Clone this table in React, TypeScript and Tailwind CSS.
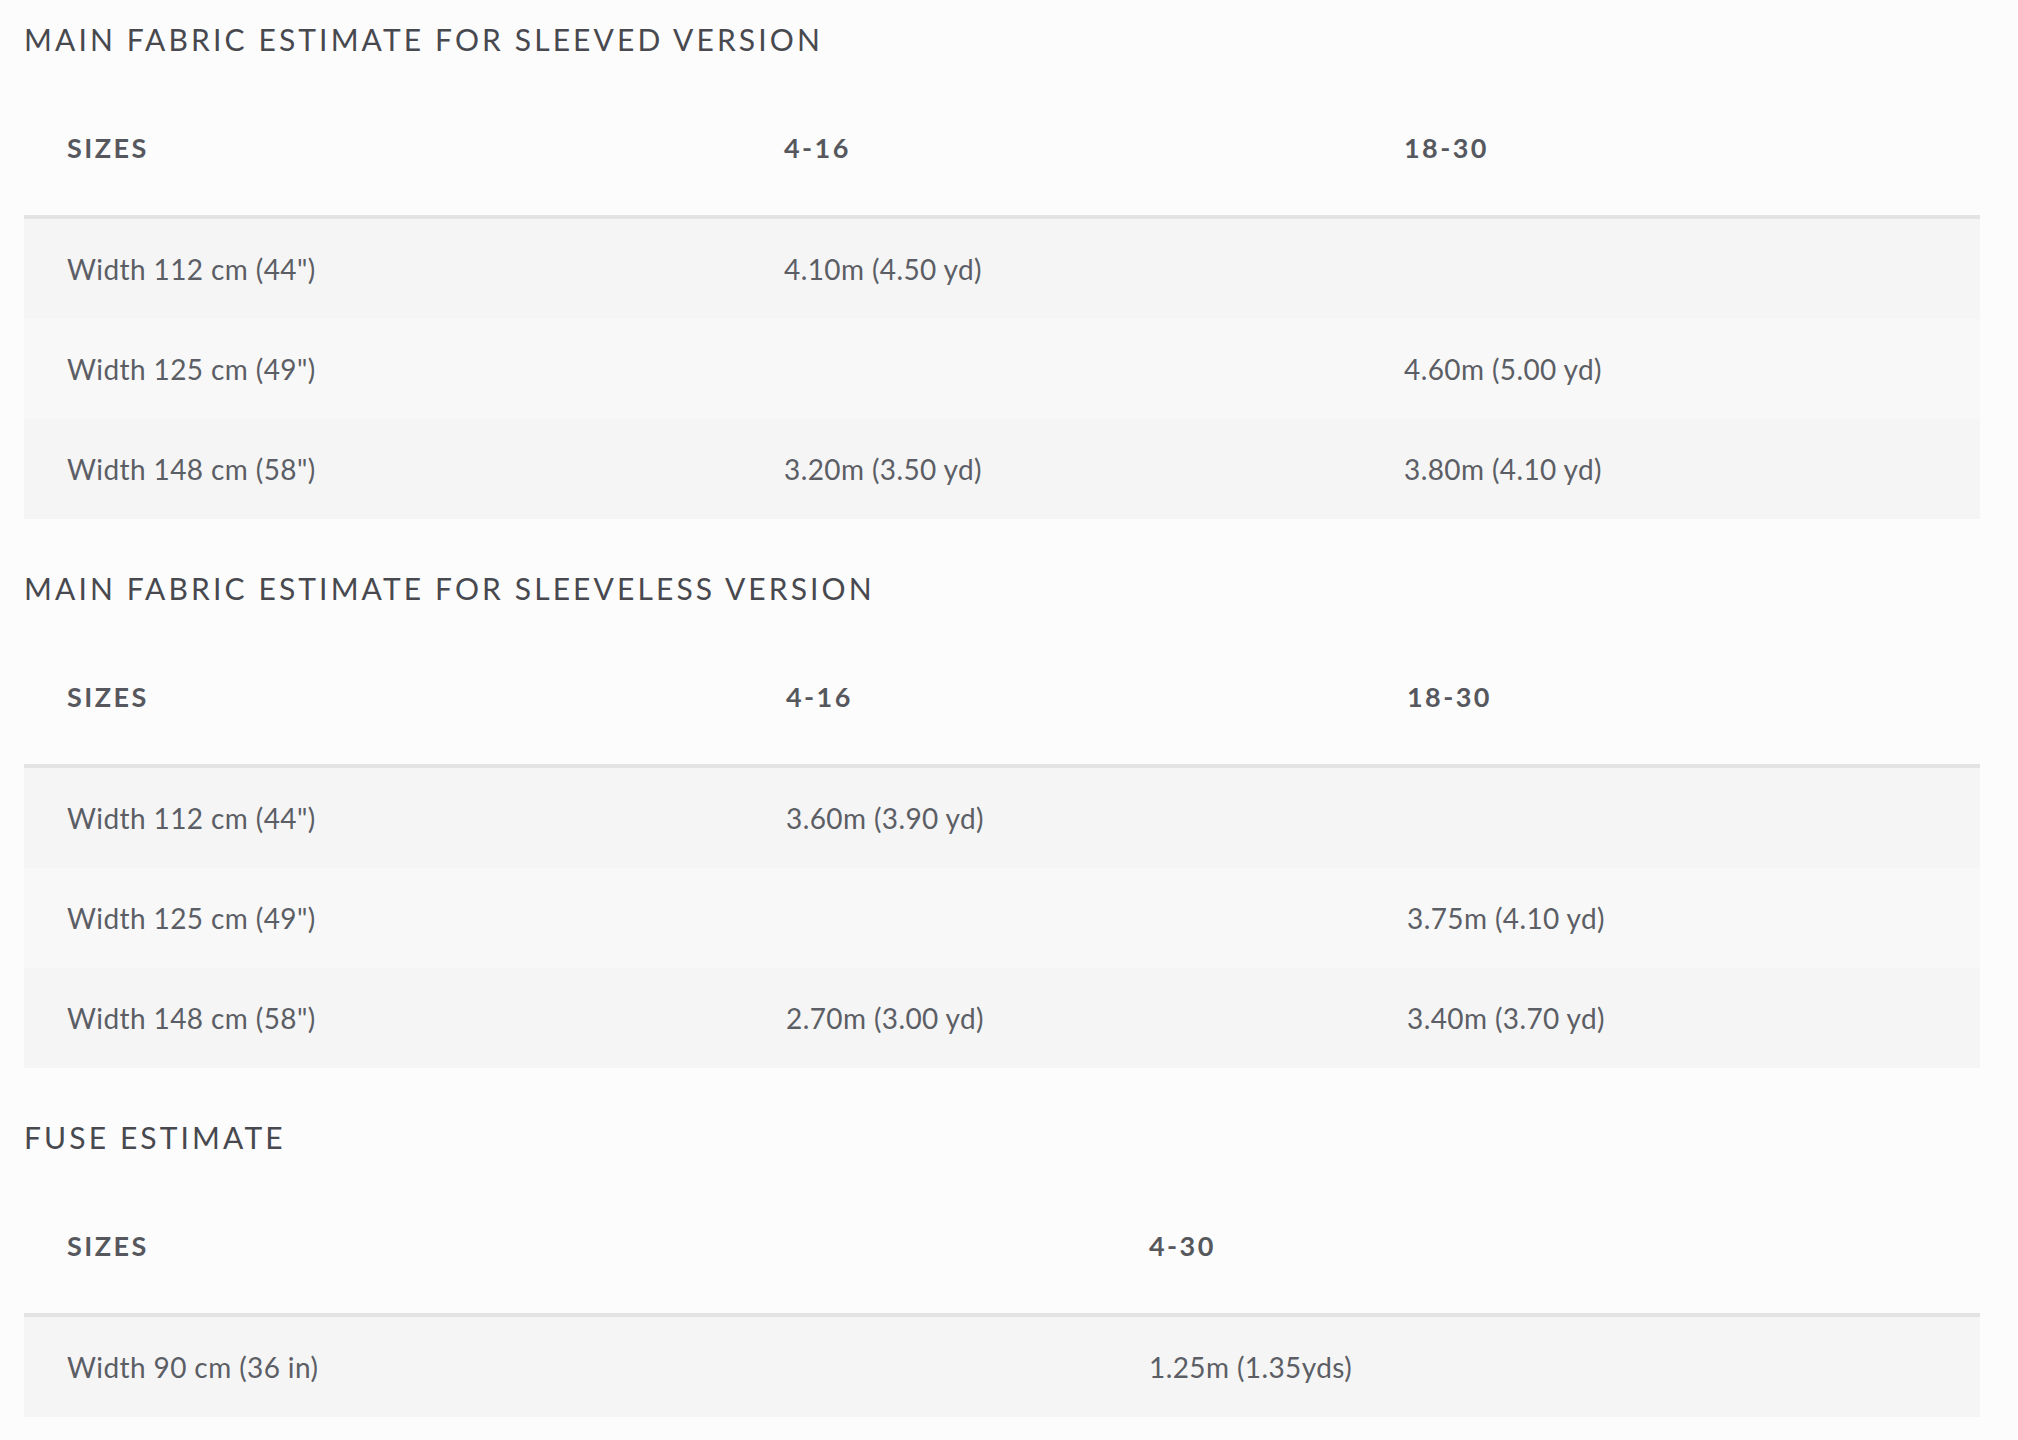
type Section = {
  title: string;
  cols: string;
  headers: string[];
  rows: string[][];
};

const sections: Section[] = [
  {
    title: "MAIN FABRIC ESTIMATE FOR SLEEVED VERSION",
    cols: "grid-cols-[717px_620px_1fr]",
    headers: ["SIZES", "4-16", "18-30"],
    rows: [
      ['Width 112 cm (44")', "4.10m (4.50 yd)", ""],
      ['Width 125 cm (49")', "", "4.60m (5.00 yd)"],
      ['Width 148 cm (58")', "3.20m (3.50 yd)", "3.80m (4.10 yd)"],
    ],
  },
  {
    title: "MAIN FABRIC ESTIMATE FOR SLEEVELESS VERSION",
    cols: "grid-cols-[719px_621px_1fr]",
    headers: ["SIZES", "4-16", "18-30"],
    rows: [
      ['Width 112 cm (44")', "3.60m (3.90 yd)", ""],
      ['Width 125 cm (49")', "", "3.75m (4.10 yd)"],
      ['Width 148 cm (58")', "2.70m (3.00 yd)", "3.40m (3.70 yd)"],
    ],
  },
  {
    title: "FUSE ESTIMATE",
    cols: "grid-cols-[1082px_1fr]",
    headers: ["SIZES", "4-30"],
    rows: [["Width 90 cm (36 in)", "1.25m (1.35yds)"]],
  },
];

const EstimateTable = ({ section }: { section: Section }) => {
  return (
    <div className="flex flex-col">
      <h2 className="h-[81px] pt-[21px] text-[30px] leading-[36px] tracking-[0.104em] text-[#48494f] font-['Lato',sans-serif] font-normal">
        {section.title}
      </h2>
      <div className={`grid ${section.cols} h-[138px] items-center border-b-4 border-[#e3e3e3] px-[43px] pt-[1px]`}>
        {section.headers.map((h) => (
          <div key={h} className="text-[27px] font-bold tracking-[0.09em] text-[#56585e] font-['Lato',sans-serif]">
            {h}
          </div>
        ))}
      </div>
      {section.rows.map((row, i) => (
        <div
          key={i}
          className={`grid ${section.cols} h-[100px] items-center px-[43px] pb-[1px] ${i % 2 === 0 ? "bg-[#f5f5f5]" : "bg-[#f8f8f8]"}`}
        >
          {row.map((cell, j) => (
            <div key={j} className="text-[28px] tracking-[0.4px] text-[#5c5e65] font-['Lato',sans-serif]">
              {cell}
            </div>
          ))}
        </div>
      ))}
    </div>
  );
};

export default function App() {
  return (
    <div className="min-h-[1440px] w-[2018px] bg-[#fcfcfc] pl-[24px] pr-[38px]">
      <div className="flex flex-col gap-[30px]">
        {sections.map((s) => (
          <EstimateTable key={s.title} section={s} />
        ))}
      </div>
    </div>
  );
}
